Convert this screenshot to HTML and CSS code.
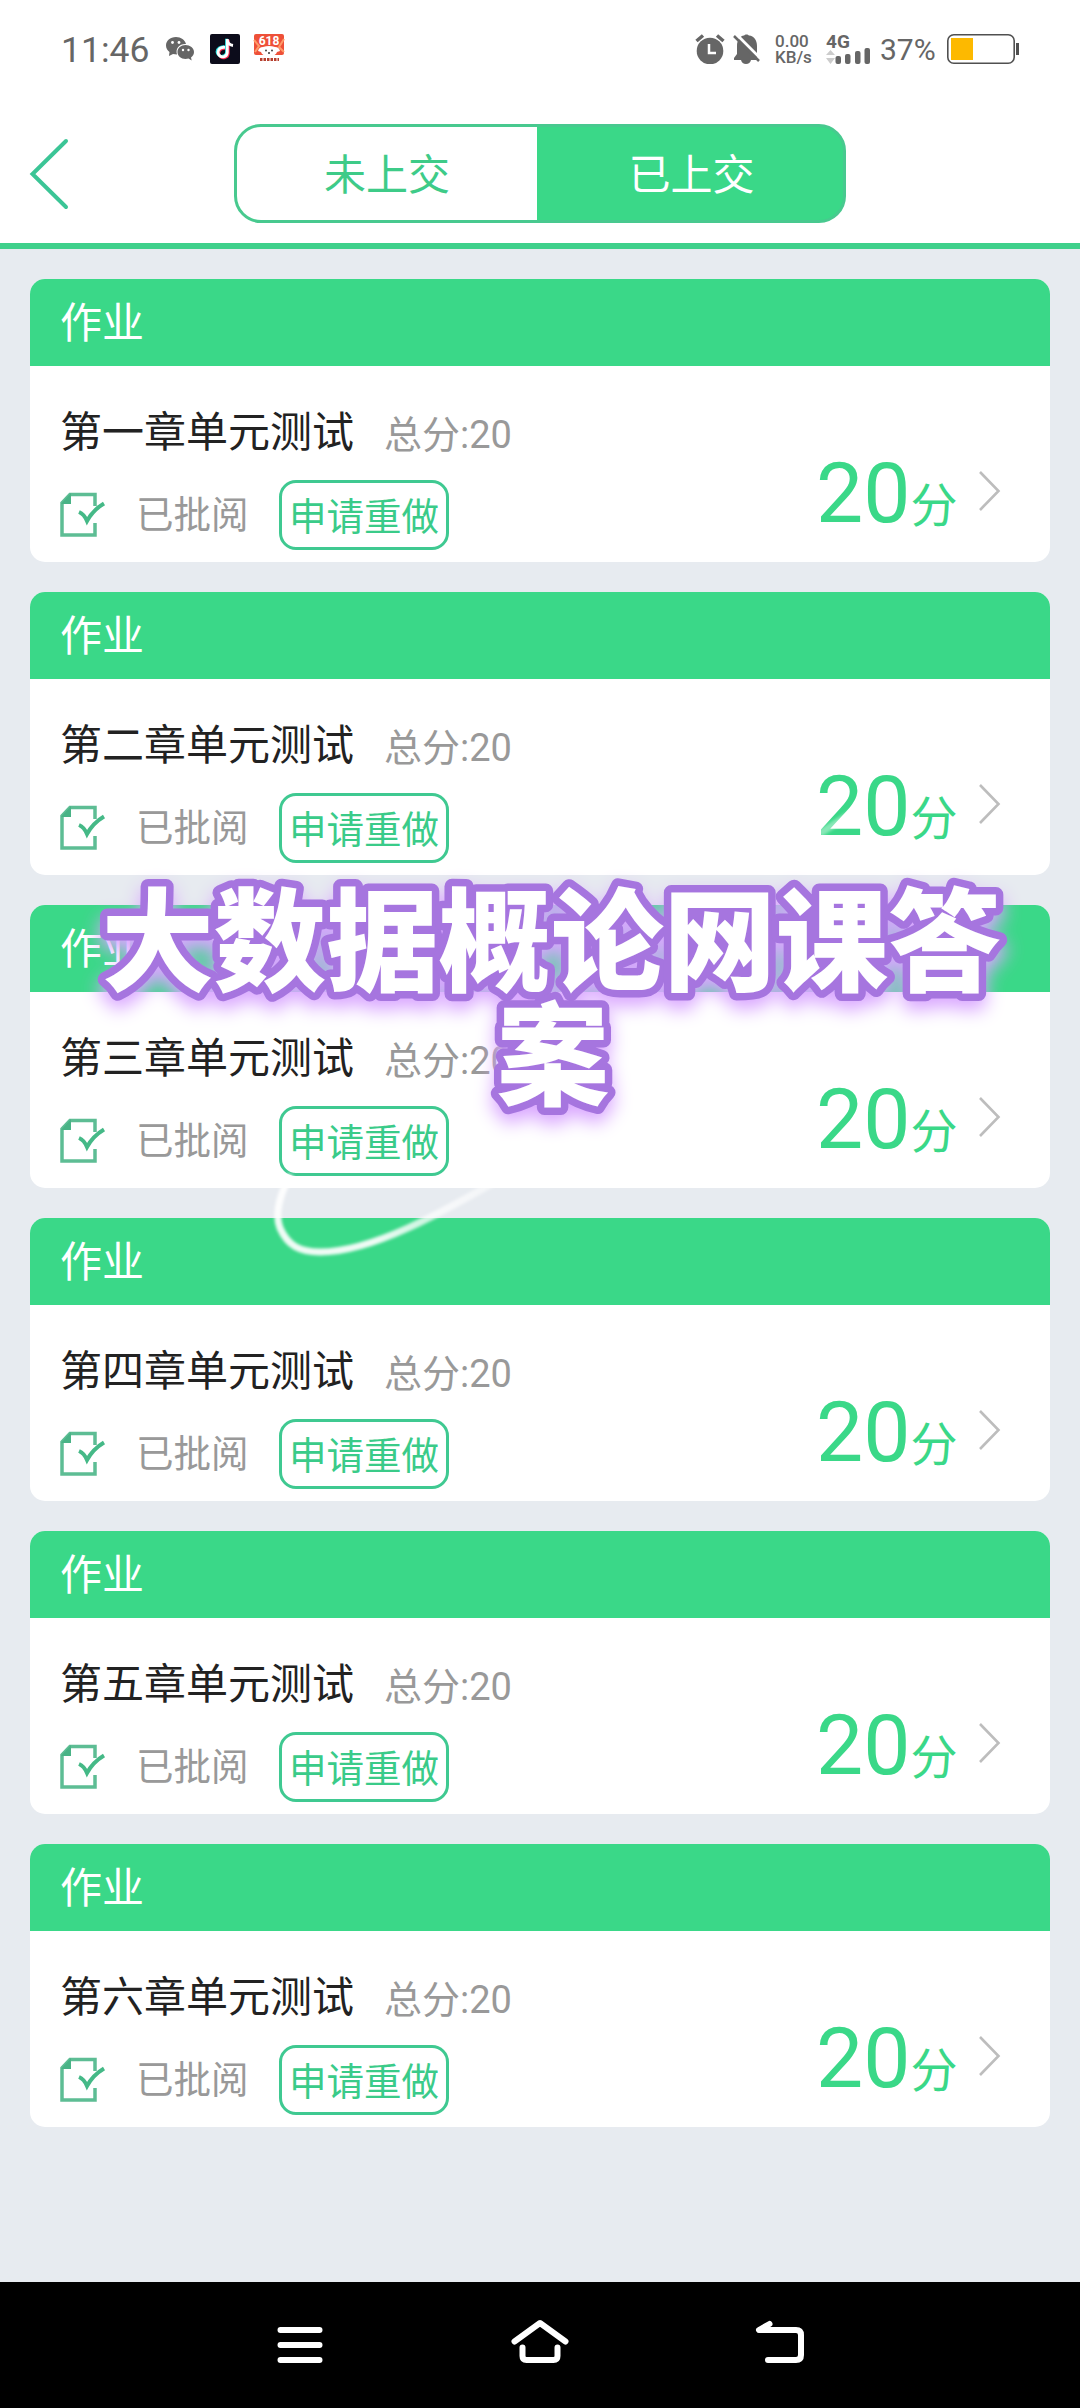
FILE: index.html
```html
<!DOCTYPE html>
<html lang="zh-CN">
<head>
<meta charset="utf-8">
<title>作业</title>
<link rel="stylesheet" href="styles.css">
</head>
<body>
<svg class="defs" width="0" height="0" aria-hidden="true">
  <symbol id="paper" viewBox="0 0 46 46">
    <path d="M35 14V2.500H10L2 11V43H35V31" fill="none" stroke="#5dbd94" stroke-width="3.500"/>
    <path d="M1 12 11 1V12Z" fill="#49b386"/>
    <path d="M19 20Q24 22 27 29Q33 18 44 11.500" fill="none" stroke="#45b987" stroke-width="4"/>
  </symbol>
  <symbol id="next" viewBox="0 0 24 44">
    <path d="M2 3 20.500 22 2 41" fill="none" stroke="#bdbdbd" stroke-width="2.600"/>
  </symbol>
</svg>
<div class="screen">
  <header class="status">
    <div class="status-left">
      <span class="clock">11:46</span>
      <svg class="wechat" width="28" height="24" viewBox="0 0 28 24"><path d="M10 0C4 0 0 4 0 8.500c0 3 1.500 5 3.500 6.500L3 19l4-2 4 .5C9 11 14 6.500 20 7 19 3 15 0 10 0Z" fill="#666"/><path d="M19.500 8C15 8 11.500 11 11.500 15s3.500 7 8 7l3-.5 3.200 2-.7-3c2-1.500 3-3.300 3-5.500 0-4-4-7-8.500-7Z" fill="#666"/><g fill="#fff"><circle cx="6.500" cy="5.500" r="1.400"/><circle cx="13" cy="5.500" r="1.400"/><circle cx="17" cy="13" r="1.200"/><circle cx="22.500" cy="13" r="1.200"/></g></svg>
      <svg class="tiktok" width="30" height="30" viewBox="0 0 30 30"><rect width="30" height="30" rx="2" fill="#0c0c1b"/><g fill="none" stroke-width="2.800"><path d="M15 13.500c-4-.5-7 2-7 5s3 5 5.500 4.500 4-2 4-4.500V5" stroke="#ff2c55" transform="translate(.8 .8)"/><path d="M15 13c-4-.5-7.500 2-7.500 5s3 5 5.500 4.500 4-2 4-4.500V5" stroke="#25e5e5" transform="translate(-.5 -.3)"/><path d="M15 13.300c-4-.5-7 2-7 5s3 5 5.500 4.500 3.800-2 3.800-4.500V5c0 4 2 6 5.700 6.500" stroke="#fff"/></g></svg>
      <svg width="32" height="30" viewBox="0 0 32 30"><rect x="1" y="0" width="30" height="21" rx="2" fill="#ee5038"/><path d="M1 6 6 12 2 18M31 5l-5 8 5 5" stroke="#ff9a68" stroke-width="2" fill="none"/><text x="16" y="11" class="promo">618</text><path d="M5 17q1-4 5-4 6-2 12 0 4 0 5 4l-3 1q-1 4-8 4t-8-4Z" fill="#fff"/><circle cx="13" cy="16.500" r="1" fill="#444"/><circle cx="19" cy="16.500" r="1" fill="#444"/><path d="M15 19h2" stroke="#333" stroke-width="1.500"/><path d="M7 25.500h19" stroke="#b6402f" stroke-width="3" stroke-dasharray="2.500 1"/></svg>
    </div>
    <div class="status-right">
      <svg width="30" height="30" viewBox="0 0 30 30"><circle cx="15" cy="17" r="13.300" fill="#666"/><path d="M1.500 7 8 1.500M28.500 7 22 1.500" stroke="#666" stroke-width="3.500"/><path d="M14 10v9h7" fill="none" stroke="#fff" stroke-width="2.500"/></svg>
      <svg class="bell" width="28" height="30" viewBox="0 0 28 30"><path d="M1 26V24L4 20V12C4 6 7 2 11 1.500 12 0 15 0 16 1.500 21 2 24 6 24 12V26Z" fill="#666"/><path d="M8 26h10q-1 4-5 4T8 26Z" fill="#666"/><path d="M3 0 29 26" stroke="#fff" stroke-width="3"/><path d="M1 2 26 27" stroke="#666" stroke-width="2.500"/></svg>
      <span class="speed">0.00<br>KB/s</span>
      <svg class="signal" width="46" height="36" viewBox="0 -6 46 36"><text x="0" y="13.500" class="net">4G</text><path d="M0 21 4.500 16 9 21ZM0 24H9L4.500 30Z" fill="#ccc"/><g fill="#666"><rect x="9.500" y="22" width="5.500" height="8" rx="2"/><rect x="19" y="20" width="5.500" height="10" rx="2"/><rect x="29" y="17" width="5.500" height="13" rx="2"/><rect x="38.500" y="14" width="5.500" height="16" rx="2"/></g></svg>
      <span class="percent">37%</span>
      <svg width="73" height="30" viewBox="0 0 73 30"><rect x=".8" y=".8" width="66.400" height="28.400" rx="6" fill="#fff" stroke="#505050" stroke-width="1.600"/><rect x="4" y="4" width="22" height="22" fill="#fdb900"/><rect x="69" y="9" width="3" height="12" fill="#505050"/></svg>
    </div>
  </header>
  <nav class="topbar">
    <svg class="back" width="40" height="72" viewBox="0 0 40 72"><path d="M37 3 3.500 36 37 69" fill="none" stroke="#3bc596" stroke-width="4" stroke-linecap="round"/></svg>
    <div class="tabs"><span class="tab">未上交</span><span class="tab active">已上交</span></div>
  </nav>
  <main class="list">
    <section class="card"><h2>作业</h2><div class="body"><div class="info"><div class="line"><span class="name">第一章单元测试</span><span class="total">总分:20</span></div><div class="line second"><svg class="paper"><use href="#paper"/></svg><span class="state">已批阅</span><span class="redo">申请重做</span></div></div><div class="score"><b>20</b><i>分</i></div><svg class="next"><use href="#next"/></svg></div></section>
    <section class="card"><h2>作业</h2><div class="body"><div class="info"><div class="line"><span class="name">第二章单元测试</span><span class="total">总分:20</span></div><div class="line second"><svg class="paper"><use href="#paper"/></svg><span class="state">已批阅</span><span class="redo">申请重做</span></div></div><div class="score"><b>20</b><i>分</i></div><svg class="next"><use href="#next"/></svg></div></section>
    <section class="card"><h2>作业</h2><div class="body"><div class="info"><div class="line"><span class="name">第三章单元测试</span><span class="total">总分:20</span></div><div class="line second"><svg class="paper"><use href="#paper"/></svg><span class="state">已批阅</span><span class="redo">申请重做</span></div></div><div class="score"><b>20</b><i>分</i></div><svg class="next"><use href="#next"/></svg></div></section>
    <section class="card"><h2>作业</h2><div class="body"><div class="info"><div class="line"><span class="name">第四章单元测试</span><span class="total">总分:20</span></div><div class="line second"><svg class="paper"><use href="#paper"/></svg><span class="state">已批阅</span><span class="redo">申请重做</span></div></div><div class="score"><b>20</b><i>分</i></div><svg class="next"><use href="#next"/></svg></div></section>
    <section class="card"><h2>作业</h2><div class="body"><div class="info"><div class="line"><span class="name">第五章单元测试</span><span class="total">总分:20</span></div><div class="line second"><svg class="paper"><use href="#paper"/></svg><span class="state">已批阅</span><span class="redo">申请重做</span></div></div><div class="score"><b>20</b><i>分</i></div><svg class="next"><use href="#next"/></svg></div></section>
    <section class="card"><h2>作业</h2><div class="body"><div class="info"><div class="line"><span class="name">第六章单元测试</span><span class="total">总分:20</span></div><div class="line second"><svg class="paper"><use href="#paper"/></svg><span class="state">已批阅</span><span class="redo">申请重做</span></div></div><div class="score"><b>20</b><i>分</i></div><svg class="next"><use href="#next"/></svg></div></section>
  </main>
  <footer class="sysnav">
    <svg width="60" height="60" viewBox="0 0 60 60"><path d="M10.500 15h39M10.500 30h39M10.500 45h39"/></svg>
    <svg width="60" height="60" viewBox="0 0 60 60"><path d="M4.500 26.500 30 8 55.500 26.500M12.500 32.500V41q0 4 4 4H43.500q4 0 4-4V32.500"/></svg>
    <svg width="60" height="60" viewBox="0 0 60 60"><path d="M19.500 9 9 15H46q5 0 5 5V40q0 5-5 5H18"/></svg>
  </footer>
  <svg class="swoosh" width="620" height="460" viewBox="0 0 620 460">
    <defs>
      <linearGradient id="fade" gradientUnits="userSpaceOnUse" x1="120" y1="420" x2="290" y2="350"><stop offset="0" stop-color="#fff" stop-opacity=".92"/><stop offset="1" stop-color="#fff" stop-opacity=".35"/></linearGradient>
      <filter id="soft"><feGaussianBlur stdDeviation="1.500"/></filter>
    </defs>
    <path d="M44 372C34 388 27 410 33 425C41 443 53 449 73 449C123 449 188 415 280 360" fill="none" stroke="url(#fade)" stroke-width="7" filter="url(#soft)"/>
    <path d="M572 31 608 8" fill="none" stroke="#fff" stroke-opacity=".4" stroke-width="7" filter="url(#soft)"/>
  </svg>
  <svg class="caption" width="1080" height="290" viewBox="0 0 1080 290">
    <text x="551" y="133">大数据概论网课答</text>
    <text x="553" y="246.500">案</text>
  </svg>
</div>
</body>
</html>
```
FILE: styles.css
```css
* { box-sizing: border-box; }
body { margin: 0; font-family: Roboto, "Noto Sans CJK SC", sans-serif; }
svg { display: block; flex: none; }
.defs { position: absolute; }
.screen {
  position: relative;
  width: 1080px;
  height: 2408px;
  overflow: hidden;
  background: #e7ebf0;
  display: flex;
  flex-direction: column;
}
.status {
  height: 98px;
  padding: 0 60px;
  background: #fff;
  color: #666;
  display: flex;
  justify-content: space-between;
}
.status-left, .status-right { display: flex; align-items: center; height: 98px; }
.status-left { padding-left: 1px; }
.clock { font-size: 35.5px; width: 105px; line-height: 40px; padding-top: 1px; }
.wechat { margin-right: 16px; }
.tiktok { margin-right: 13px; }
.promo { font: bold 12px Roboto, sans-serif; fill: #fff; text-anchor: middle; }
.bell { margin-left: 8px; }
.speed { font-size: 17px; font-weight: 500; line-height: 16px; margin-left: 14px; width: 37px; }
.signal { margin: -6px 0 0 14px; }
.net { font: bold 19px Roboto, sans-serif; fill: #666; }
.percent { font-size: 30px; line-height: 34px; padding-top: 2px; margin: 0 0 0 8px; width: 67px; }
.topbar {
  height: 151px;
  background: #fff;
  border-bottom: 6px solid #3fd08b;
  padding: 26px 0 0 29px;
  display: flex;
}
.back { margin-top: 14px; }
.tabs {
  width: 612px;
  height: 99px;
  margin-left: 165px;
  border: 3px solid #48c98f;
  border-radius: 27px;
  overflow: hidden;
  display: flex;
  background: #3ad888;
}
.tab {
  width: 300px;
  background: #fff;
  color: #3ecb88;
  font-size: 42px;
  line-height: 97px;
  text-align: center;
}
.tab.active { flex: 1; background: #3ad888; color: #fff; padding-left: 3px; }
.list { flex: 1; padding: 30px; display: flex; flex-direction: column; gap: 30px; }
.card { height: 283px; border-radius: 15px; overflow: hidden; background: #fff; }
.card h2 {
  margin: 0;
  height: 87px;
  padding-left: 30px;
  background: #3ad888;
  color: #fff;
  font-size: 42px;
  font-weight: 400;
  line-height: 90px;
}
.body { height: 196px; padding-left: 30px; display: flex; }
.info { width: 751px; padding-top: 36px; }
.line { display: flex; height: 60px; line-height: 62px; }
.name { font-size: 42px; color: #222; margin-right: 30px; }
.total { font-size: 38px; color: #999; padding-top: 2px; }
.second { height: 70px; margin-top: 18px; line-height: 73px; align-items: center; }
.paper { width: 46px; height: 46px; margin-right: 30px; }
.state { font-size: 37.5px; color: #999; width: 143px; }
.redo {
  width: 170px;
  height: 70px;
  border: 3px solid #3fc991;
  border-radius: 17px;
  color: #3acb89;
  font-size: 37.5px;
  line-height: 68px;
  text-align: center;
  white-space: nowrap;
}
.score { width: 167px; padding: 80px 0 0 5px; color: #3ad888; line-height: 96px; display: flex; align-items: baseline; }
.score b { font-size: 84px; font-weight: 400; }
.score i { font-size: 47px; font-style: normal; }
.next { width: 24px; height: 44px; margin-top: 103px; }
.sysnav { height: 126px; background: #000; padding: 33px 270px 0; display: flex; justify-content: space-between; }
.sysnav path { fill: none; stroke: #fff; stroke-width: 6; stroke-linecap: round; stroke-linejoin: round; }
/* Decoration and caption lie over the list */
.swoosh { position: absolute; left: 247px; top: 803px; }
.caption { position: absolute; left: 0; top: 850px; filter: drop-shadow(0 9px 9px #d9a6ff); }
.caption text {
  font-family: "Noto Sans CJK SC", sans-serif;
  font-size: 112.4px;
  font-weight: 900;
  text-anchor: middle;
  fill: #fff;
  stroke: #a675df;
  stroke-width: 15px;
  stroke-linejoin: round;
  paint-order: stroke fill;
}
```
